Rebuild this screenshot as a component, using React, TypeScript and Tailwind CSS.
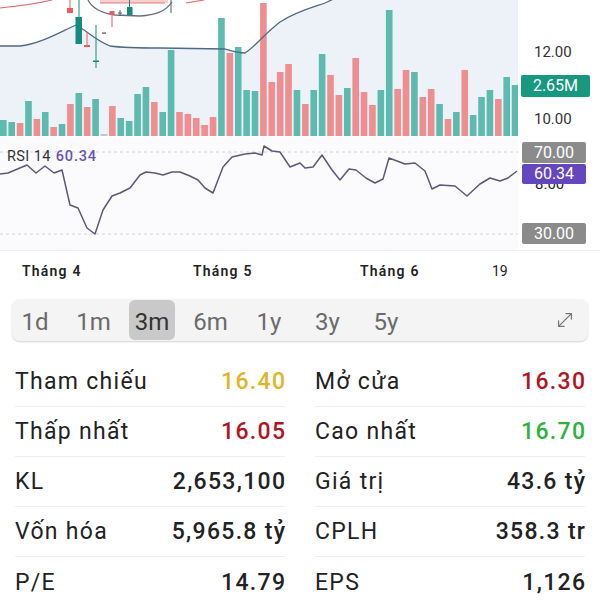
import React from "react";
import { MoveDiagonal } from "lucide-react";

type Bar = [number, "t" | "r" | "g"];

// volume bars, top y of each bar (bottom is 136)
const bars: Bar[] = [
  [120, "t"], [122, "t"], [123, "r"], [101, "t"], [119, "r"], [112, "t"], [127, "r"], [124, "t"],
  [104, "r"], [93, "t"], [107, "r"], [99, "t"], [134, "g"], [106, "r"], [118, "t"], [121, "t"],
  [94, "t"], [87, "t"], [102, "r"], [112, "t"], [50, "t"], [112, "r"], [114, "r"], [118, "r"],
  [125, "r"], [117, "r"], [18, "t"], [53, "r"], [47, "t"], [90, "t"], [91, "t"], [3, "r"],
  [82, "r"], [72, "r"], [64, "r"], [90, "t"], [104, "r"], [90, "t"], [54, "t"], [75, "r"],
  [95, "r"], [88, "t"], [58, "r"], [92, "r"], [105, "r"], [90, "t"], [10, "t"], [89, "r"],
  [70, "r"], [72, "t"], [97, "r"], [89, "r"], [104, "t"], [119, "r"], [112, "t"], [70, "r"],
  [115, "t"], [97, "t"], [90, "t"], [99, "r"], [77, "t"], [85, "t"],
];

const barColor = { t: "#5dbaae", r: "#ef8e90", g: "#c4c4c4" };

const rsiPoints = [
  [0, 174], [8, 173], [27, 165], [36, 173], [45, 166], [54, 173], [62, 170], [70, 205], [78, 208],
  [87, 228], [95, 234], [103, 210], [112, 196], [120, 193], [130, 188], [140, 175], [146, 172],
  [155, 173], [163, 175], [172, 172], [180, 172], [190, 176], [198, 180], [205, 188], [213, 193],
  [223, 167], [232, 157], [245, 154], [255, 153], [262, 155], [264, 146], [272, 151], [280, 152],
  [290, 167], [300, 163], [305, 168], [313, 167], [322, 155], [332, 170], [340, 180], [349, 169],
  [356, 170], [366, 178], [375, 183], [383, 179], [389, 158], [405, 164], [415, 163], [425, 171],
  [432, 189], [440, 185], [455, 186], [467, 196], [480, 184], [490, 178], [500, 181], [508, 178],
  [517, 171],
];

const bandPath =
  "M0 46 L20 46 C40 44 60 32 76 25 C86 30 95 40 110 46 C125 48 140 48 160 48 L225 49 C232 51 238 53 245 53 C255 47 262 36 280 22 C295 12 310 8 325 3 L340 -4";

const tabs = ["1d", "1m", "3m", "6m", "1y", "3y", "5y"];

const stats: { label: string; value: string; color: string }[][] = [
  [
    { label: "Tham chiếu", value: "16.40", color: "text-[#e0b52a]" },
    { label: "Mở cửa", value: "16.30", color: "text-[#b3141f]" },
  ],
  [
    { label: "Thấp nhất", value: "16.05", color: "text-[#b3141f]" },
    { label: "Cao nhất", value: "16.70", color: "text-[#2cb23d]" },
  ],
  [
    { label: "KL", value: "2,653,100", color: "text-[#222]" },
    { label: "Giá trị", value: "43.6 tỷ", color: "text-[#222]" },
  ],
  [
    { label: "Vốn hóa", value: "5,965.8 tỷ", color: "text-[#222]" },
    { label: "CPLH", value: "358.3 tr", color: "text-[#222]" },
  ],
  [
    { label: "P/E", value: "14.79", color: "text-[#222]" },
    { label: "EPS", value: "1,126", color: "text-[#222]" },
  ],
];

function Chart() {
  return (
    <svg width={518} height={250} viewBox="0 0 518 250" className="block shrink-0">
      {/* price pane fill below band */}
      <path d={`${bandPath} L518 -4 L518 136 L0 136 Z`} fill="#edf2f8" />
      {/* rsi pane */}
      <rect x={0} y={138} width={518} height={112} fill="#fbfbfd" />

      {bars.map(([top, c], i) => (
        <rect key={i} x={i * 8.39} y={top} width={6.6} height={136 - top} fill={barColor[c]} />
      ))}

      {/* top overlays */}
      <rect x={100} y={0} width={68} height={3} fill="#f7cfcf" />
      <path d="M100 3 L165 3" stroke="#e77b7b" strokeWidth={1.2} fill="none" />
      <path d="M0 8 C20 6 40 3 52 0" stroke="#e06a6a" strokeWidth={1.2} fill="none" />
      <path d="M186 3 C192 2 198 1 204 0" stroke="#e06a6a" strokeWidth={1.2} fill="none" />
      <path d="M88 0 C92 8 100 13 115 15 L140 16 C155 15 165 12 172 2" stroke="#6b6a82" strokeWidth={1.3} fill="none" />
      <path d={bandPath} stroke="#4f6a80" strokeWidth={1.3} fill="none" />

      {/* candles */}
      <line x1={70} y1={0} x2={70} y2={9} stroke="#e85c5c" strokeWidth={1} />
      <rect x={67} y={8} width={6} height={5} fill="#e85c5c" />
      <line x1={79} y1={0} x2={79} y2={18} stroke="#138c7d" strokeWidth={1} />
      <rect x={75.5} y={17} width={6.5} height={27} fill="#138c7d" />
      <line x1={87} y1={32} x2={87} y2={46} stroke="#e85c5c" strokeWidth={1} />
      <rect x={84} y={45} width={6} height={2} fill="#e85c5c" />
      <line x1={96} y1={25} x2={96} y2={68} stroke="#138c7d" strokeWidth={1} />
      <rect x={93} y={60.5} width={6} height={1.5} fill="#138c7d" />
      <rect x={102} y={32.5} width={4} height={1.2} fill="#4a4a55" />
      <line x1={112} y1={11} x2={112} y2={27} stroke="#e85c5c" strokeWidth={1} />
      <rect x={109.5} y={11} width={5} height={4} fill="#e85c5c" />
      <line x1={120} y1={10} x2={120} y2={16} stroke="#4a5a66" strokeWidth={1} />
      <rect x={118} y={12.5} width={4} height={1} fill="#4a5a66" />
      <line x1={129.5} y1={0} x2={129.5} y2={8} stroke="#138c7d" strokeWidth={1} />
      <rect x={127} y={7} width={5.5} height={8} fill="#138c7d" />
      <line x1={171} y1={0} x2={171} y2={13} stroke="#4a5a66" strokeWidth={1} />

      {/* rsi guides */}
      <line x1={0} y1={152} x2={518} y2={152} stroke="#cfd2d8" strokeWidth={1} strokeDasharray="3 3" />
      <line x1={0} y1={234} x2={518} y2={234} stroke="#cfd2d8" strokeWidth={1} strokeDasharray="3 3" />
      <polyline
        points={rsiPoints.map((p) => p.join(",")).join(" ")}
        stroke="#5c5877"
        strokeWidth={1.5}
        fill="none"
        strokeLinejoin="round"
      />
    </svg>
  );
}

const badge = "ml-[4px] w-[64px] rounded-[2px] text-center text-[16px] text-white";

// right-hand price / rsi scale
function Scale() {
  return (
    <div className="flex flex-1 flex-col pt-[42px]">
      <span className="h-[20px] pl-[16px] text-[15px] leading-[20px] text-[#333]">12.00</span>
      <span className="mt-[13px] ml-[3px] h-[22px] w-[69px] rounded-[2px] bg-[#17987f] text-center text-[16px] leading-[22px] text-white">
        2.65M
      </span>
      <span className="mt-[12px] h-[20px] pl-[16px] text-[15px] leading-[20px] text-[#333]">10.00</span>

      <span className={`${badge} mt-[13px] h-[21px] bg-[#8b8b8b] leading-[21px]`}>70.00</span>
      <span className={`${badge} mt-[1px] h-[20px] bg-[#6447bf] leading-[20px]`}>60.34</span>
      {/* 8.00 tick, mostly hidden under the rsi value badge */}
      <div className="h-[9px] overflow-hidden pl-[17px]">
        <div className="-mt-[10px] text-[15px] leading-[20px] text-[#222]">8.00</div>
      </div>
      <span className={`${badge} mt-[30px] h-[21px] bg-[#8b8b8b] leading-[21px]`}>30.00</span>
    </div>
  );
}

export default function App() {
  return (
    <div className="w-[600px] h-[600px] overflow-hidden bg-white font-['Roboto','Noto_Sans',sans-serif] text-[#222]">
      <div className="relative flex h-[251px] border-b border-[#efefef]">
        <Chart />
        <Scale />
        <div className="absolute left-[7px] top-[147px] flex gap-[5px] text-[14.5px] leading-[20px]">
          <span className="tracking-[0.4px] text-[#333]">RSI 14</span>
          <span className="font-medium tracking-[0.8px] text-[#6a52b8]">60.34</span>
        </div>
      </div>

      <div className="flex h-[40px] items-center pl-[22px] text-[14px] leading-[20px] tracking-[1.2px]">
        <span className="w-[171px] font-semibold">Tháng 4</span>
        <span className="w-[167px] font-semibold">Tháng 5</span>
        <span className="w-[132px] font-semibold">Tháng 6</span>
        <span className="tracking-normal">19</span>
      </div>

      <div className="mx-[12px] mt-[8px] flex h-[42px] items-center rounded-[8px] bg-[#f4f4f5] shadow-[0_1px_2px_rgba(0,0,0,0.18)]">
        <div className="flex gap-[12.5px]">
          {tabs.map((t) => (
            <div
              key={t}
              className={
                t === "3m"
                  ? "flex h-[40px] w-[46px] items-center justify-center rounded-[6px] bg-[#c9c9c9] pt-[3px] text-[24px] text-[#333]"
                  : "flex h-[40px] w-[46px] items-center justify-center pt-[3px] text-[24px] text-[#6a6a6a]"
              }
            >
              {t}
            </div>
          ))}
        </div>
        <MoveDiagonal className="ml-auto mr-[12px]" size={22} strokeWidth={1.4} color="#777" />
      </div>

      <div className="mt-[16px] grid grid-cols-2 gap-x-[30px] px-[15px]">
        {[0, 1].map((col) => (
          <div key={col} className="flex flex-col">
            {stats.map((row, i) => (
              <div
                key={i}
                className={
                  i < stats.length - 1
                    ? "flex h-[50px] items-center justify-between border-b border-[#eeeeee] pt-[2px] text-[23px] tracking-[1.3px]"
                    : "flex h-[50px] items-center justify-between pt-[2px] text-[23px] tracking-[1.3px]"
                }
              >
                <span className="text-[#222]">{row[col].label}</span>
                <span className={`font-medium -mr-[1.3px] ${row[col].color}`}>{row[col].value}</span>
              </div>
            ))}
          </div>
        ))}
      </div>
    </div>
  );
}
